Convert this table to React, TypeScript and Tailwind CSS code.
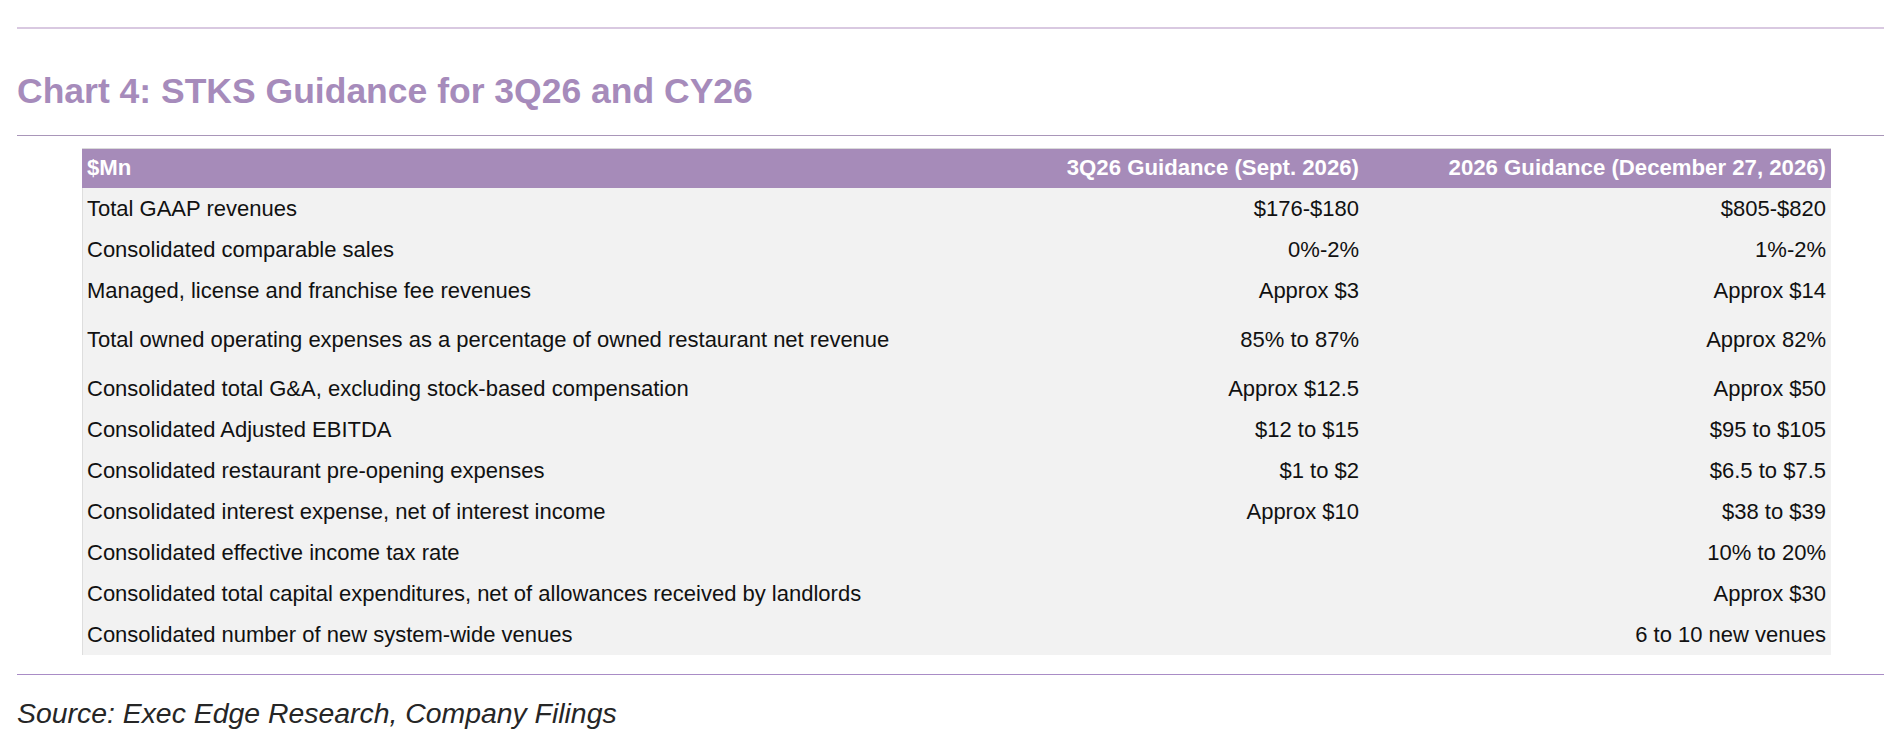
import React from 'react';

// Guidance rows: label, 3Q26 value, 2026 value, row height
interface GuidanceRow {
  label: string;
  quarter: string;
  year: string;
  tall?: boolean;
}

const rows: GuidanceRow[] = [
  { label: 'Total GAAP revenues', quarter: '$176-$180', year: '$805-$820' },
  { label: 'Consolidated comparable sales', quarter: '0%-2%', year: '1%-2%' },
  { label: 'Managed, license and franchise fee revenues', quarter: 'Approx $3', year: 'Approx $14' },
  {
    label: 'Total owned operating expenses as a percentage of owned restaurant net revenue',
    quarter: '85% to 87%',
    year: 'Approx 82%',
    tall: true,
  },
  { label: 'Consolidated total G&A, excluding stock-based compensation', quarter: 'Approx $12.5', year: 'Approx $50' },
  { label: 'Consolidated Adjusted EBITDA', quarter: '$12 to $15', year: '$95 to $105' },
  { label: 'Consolidated restaurant pre-opening expenses', quarter: '$1 to $2', year: '$6.5 to $7.5' },
  { label: 'Consolidated interest expense, net of interest income', quarter: 'Approx $10', year: '$38 to $39' },
  { label: 'Consolidated effective income tax rate', quarter: '', year: '10% to 20%' },
  { label: 'Consolidated total capital expenditures, net of allowances received by landlords', quarter: '', year: 'Approx $30' },
  { label: 'Consolidated number of new system-wide venues', quarter: '', year: '6 to 10 new venues' },
];

export default function App() {
  return (
    <div
      className="w-full h-[737px] bg-white px-[17px] pt-[27px] overflow-hidden"
      style={{ fontFamily: '"Liberation Sans", Arial, sans-serif' }}
    >
      <div className="h-[2px] bg-[#d9c9e1]" />

      <h1 className="mt-[42px] text-[35.5px] leading-[40px] font-bold text-[#a68bbb]">
        Chart 4: STKS Guidance for 3Q26 and CY26
      </h1>

      <div className="mt-[24px] h-px bg-[#a996b9]" />

      <div className="mt-[12px] ml-[65px] w-[1749px] border-t border-[#dadada]">
        {/* header */}
        <div className="grid grid-cols-[1fr_380px_467px] h-[39px] items-center bg-[#a68bb9] text-white font-bold text-[22.2px] leading-none">
          <div className="pl-[5px]">$Mn</div>
          <div className="text-right pr-[5px]">3Q26 Guidance (Sept. 2026)</div>
          <div className="text-right pr-[5px]">2026 Guidance (December 27, 2026)</div>
        </div>

        {/* body */}
        <div className="bg-[#f2f2f2] border-l border-[#dedede] text-[22px] leading-none text-[#111]">
          {rows.map((row, i) => (
            <div
              key={i}
              className={`grid grid-cols-[1fr_380px_467px] items-center ${row.tall ? 'h-[57px]' : 'h-[41px]'}`}
            >
              <div className="pl-[4px]">{row.label}</div>
              <div className="text-right pr-[5px]">{row.quarter}</div>
              <div className="text-right pr-[5px]">{row.year}</div>
            </div>
          ))}
        </div>
      </div>

      <div className="mt-[19px] h-px bg-[#a98cc6]" />

      <p className="mt-[22px] text-[28.4px] leading-[32px] italic text-[#262626]">
        Source: Exec Edge Research, Company Filings
      </p>
    </div>
  );
}
